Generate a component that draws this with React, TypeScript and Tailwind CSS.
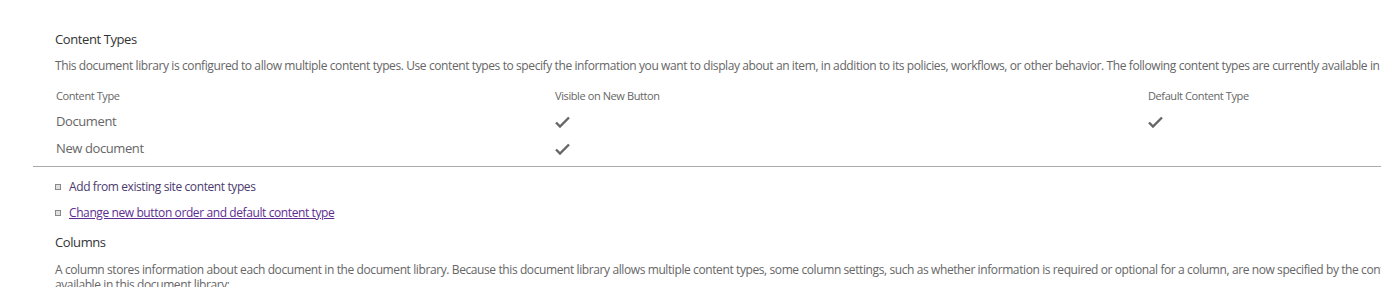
const font = { fontFamily: '"Open Sans", "Noto Sans", sans-serif' };

const rows = [
  { name: "Document", visible: true, isDefault: true },
  { name: "New document", visible: true, isDefault: false },
];

function Tick() {
  return (
    <svg width="15" height="12" viewBox="0 0 15 12" className="text-[#666666]">
      <path d="M1 6.5 L5 10.5 L14 1.5" fill="none" stroke="currentColor" strokeWidth="2.4" />
    </svg>
  );
}

export default function App() {
  return (
    <div className="h-[287px] w-[1381px] overflow-hidden bg-white tracking-[-0.025em]" style={font}>
      <div className="w-[1700px] pt-[30px]">
        <div className="pl-[55px]">
          <h2 className="text-[13px] leading-[18px] text-[#333333]">Content Types</h2>
          <p className="mt-[10px] whitespace-nowrap text-[12px] leading-[16px] text-[#666666]">
            This document library is configured to allow multiple content types. Use content types to specify the information you want to display about an item, in addition to its policies, workflows, or other behavior. The following content types are currently available in this library:
          </p>
        </div>

        <div className="mt-[14px] ml-[33px] border-b border-[#ababab] pb-[7px]">
          <div className="grid grid-cols-[499px_593px_1fr] pl-[23px] text-[11px] leading-[16px] text-[#666666]">
            <span>Content Type</span>
            <span>Visible on New Button</span>
            <span>Default Content Type</span>
          </div>
          {rows.map((r, i) => (
            <div
              key={r.name}
              className={`${i === 0 ? "mt-[8px]" : "mt-[7px]"} grid h-[20px] grid-cols-[499px_593px_1fr] items-center pl-[23px] text-[13px] text-[#666666]`}
            >
              <span>{r.name}</span>
              <span>{r.visible && <Tick />}</span>
              <span>{r.isDefault && <Tick />}</span>
            </div>
          ))}
        </div>

        <ul className="mt-[12px] space-y-[10px] pl-[55px] text-[12px] leading-[16px] text-[#5c2d91]">
          <li className="flex items-center gap-[8px]">
            <span className="h-[6px] w-[6px] border border-[#888888] bg-[#e0e0e0]" />
            <a href="#" className="text-[#4b3a6e]">Add from existing site content types</a>
          </li>
          <li className="flex items-center gap-[8px]">
            <span className="h-[6px] w-[6px] border border-[#888888] bg-[#e0e0e0]" />
            <a href="#" className="underline">Change new button order and default content type</a>
          </li>
        </ul>

        <div className="mt-[12px] pl-[55px]">
          <h2 className="text-[13px] leading-[18px] text-[#333333]">Columns</h2>
          <p className="mt-[11px] whitespace-nowrap text-[12px] leading-[15px] text-[#666666]">
            A column stores information about each document in the document library. Because this document library allows multiple content types, some column settings, such as whether information is required or optional for a column, are now specified by the content type of the document. The following columns are currently
            <br />
            available in this document library:
          </p>
        </div>
      </div>
    </div>
  );
}
